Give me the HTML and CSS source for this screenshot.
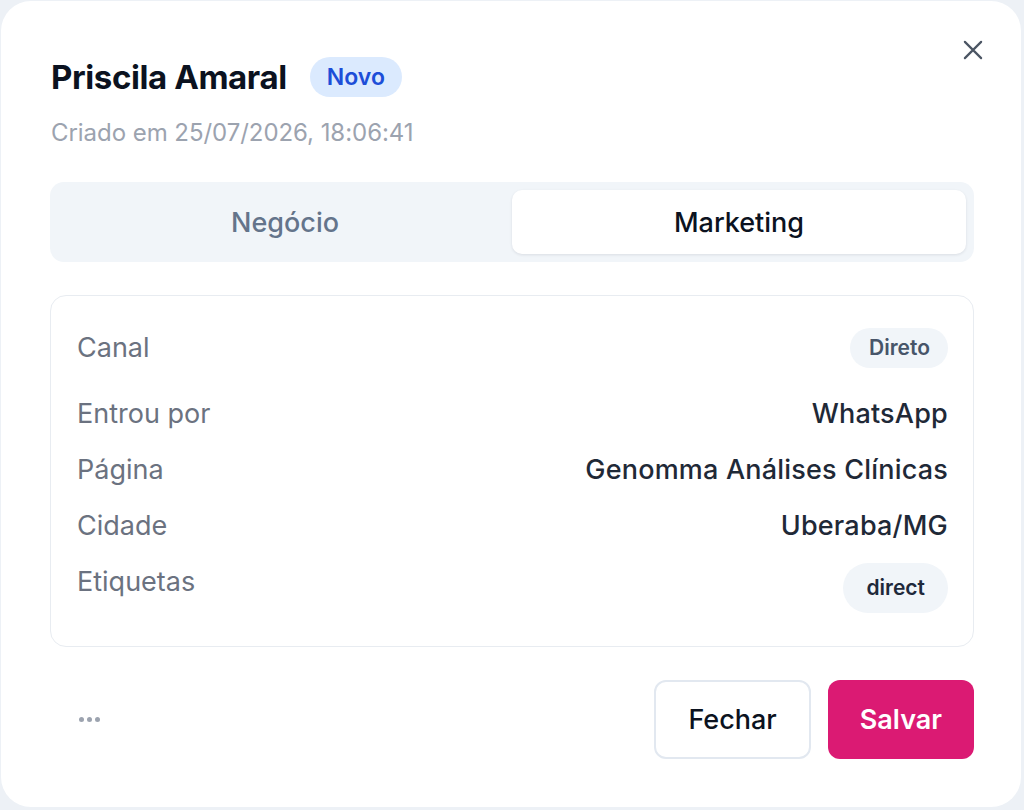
FILE: index.html
```html
<!DOCTYPE html>
<html lang="pt-BR">
<head>
<meta charset="utf-8">
<link rel="stylesheet" href="styles.css">
</head>
<body>
<div class="modal">
  <button class="close" aria-label="Fechar">
    <svg width="26" height="26" viewBox="0 0 24 24" fill="none" stroke="#4b5563" stroke-width="2" stroke-linecap="round"><path d="M4.5 4.5L19.5 19.5M19.5 4.5L4.5 19.5"/></svg>
  </button>
  <div class="head">
    <h1 class="title">Priscila Amaral</h1>
    <span class="badge">Novo</span>
  </div>
  <div class="created">Criado em 25/07/2026, 18:06:41</div>
  <div class="tabs">
    <div class="tab">Negócio</div>
    <div class="tab active">Marketing</div>
  </div>
  <div class="card">
    <div class="row first"><span class="label">Canal</span><span class="pill">Direto</span></div>
    <div class="row"><span class="label">Entrou por</span><span class="value">WhatsApp</span></div>
    <div class="row"><span class="label">Página</span><span class="value">Genomma Análises Clínicas</span></div>
    <div class="row"><span class="label">Cidade</span><span class="value">Uberaba/MG</span></div>
    <div class="row top"><span class="label">Etiquetas</span><span class="pill tag">direct</span></div>
  </div>
  <div class="footer">
    <div class="dots"><i></i><i></i><i></i></div>
    <div class="actions">
      <button class="btn ghost">Fechar</button>
      <button class="btn primary">Salvar</button>
    </div>
  </div>
</div>
</body>
</html>
```
FILE: styles.css
```css
* { box-sizing: border-box; }
html, body { margin: 0; padding: 0; }
body {
  background: #edf1f6;
  font-family: Inter, "Noto Sans", sans-serif;
  width: 1024px;
  height: 810px;
  padding: 1px;
}
.modal {
  position: relative;
  background: #fff;
  border-radius: 30px;
  width: 1020px;
  height: 806px;
  padding: 55px 47px 0 49px;
}
.close {
  position: absolute;
  top: 36px;
  right: 35px;
  border: 0;
  background: none;
  padding: 0;
  width: 26px;
  height: 26px;
}
.close svg { display: block; }
.head {
  display: flex;
  align-items: center;
  gap: 23px;
  height: 42px;
}
.title {
  margin: 0 0 0 1px;
  font-size: 33px;
  font-weight: 700;
  color: #0b1220;
  letter-spacing: -0.4px;
}
.badge {
  background: #dbeafe;
  color: #1d4ed8;
  font-weight: 600;
  font-size: 23px;
  border-radius: 999px;
  padding: 7px 17px;
  line-height: 26px;
}
.created {
  margin-top: 20px;
  margin-left: 1px;
  font-size: 24px;
  color: #9ca3af;
  line-height: 30px;
  letter-spacing: -0.05px;
}
.tabs {
  margin-top: 34px;
  background: #f1f5f9;
  border-radius: 14px;
  padding: 8px;
  display: grid;
  grid-template-columns: 1fr 1fr;
  height: 80px;
}
.tab {
  display: flex;
  align-items: center;
  justify-content: center;
  font-size: 27px;
  font-weight: 500;
  color: #64748b;
  border-radius: 10px;
}
.tab.active {
  background: #fff;
  color: #0b1220;
  box-shadow: 0 1px 3px rgba(15, 23, 42, 0.10);
}
.card {
  margin-top: 33px;
  border: 1px solid #e8ecf1;
  border-radius: 16px;
  padding: 32px 25px 33px 26px;
  display: flex;
  flex-direction: column;
  gap: 16px;
}
.row {
  display: flex;
  justify-content: space-between;
  align-items: center;
  min-height: 40px;
}
.row.first { margin-bottom: 10px; }
.row.top { align-items: flex-start; }
.label {
  font-size: 27px;
  color: #6b7280;
  line-height: 40px;
}
.value {
  font-size: 27px;
  font-weight: 500;
  color: #1f2937;
  line-height: 40px;
  letter-spacing: 0.2px;
}
.pill {
  background: #f1f5f9;
  color: #475569;
  font-weight: 600;
  font-size: 21px;
  border-radius: 999px;
  padding: 0 18px 0 19px;
  line-height: 40px;
}
.pill.tag {
  color: #1e293b;
  line-height: 50px;
  margin-top: 1px;
  padding: 0 23px;
}
.footer {
  margin-top: 33px;
  display: flex;
  justify-content: space-between;
  align-items: center;
}
.dots {
  display: flex;
  gap: 3px;
  padding-left: 29px;
}
.dots i {
  width: 5px;
  height: 5px;
  border-radius: 50%;
  background: #9ca3af;
}
.actions {
  display: flex;
  gap: 17px;
}
.btn {
  font-family: Inter, "Noto Sans", sans-serif;
  font-size: 27px;
  height: 79px;
  border-radius: 12px;
  padding: 0 32px;
  cursor: pointer;
}
.btn.ghost {
  background: #fff;
  border: 2px solid #e2e8f0;
  color: #0b1220;
  font-weight: 500;
}
.btn.primary {
  background: #db1a73;
  border: 0;
  color: #fff;
  font-weight: 600;
}
```
